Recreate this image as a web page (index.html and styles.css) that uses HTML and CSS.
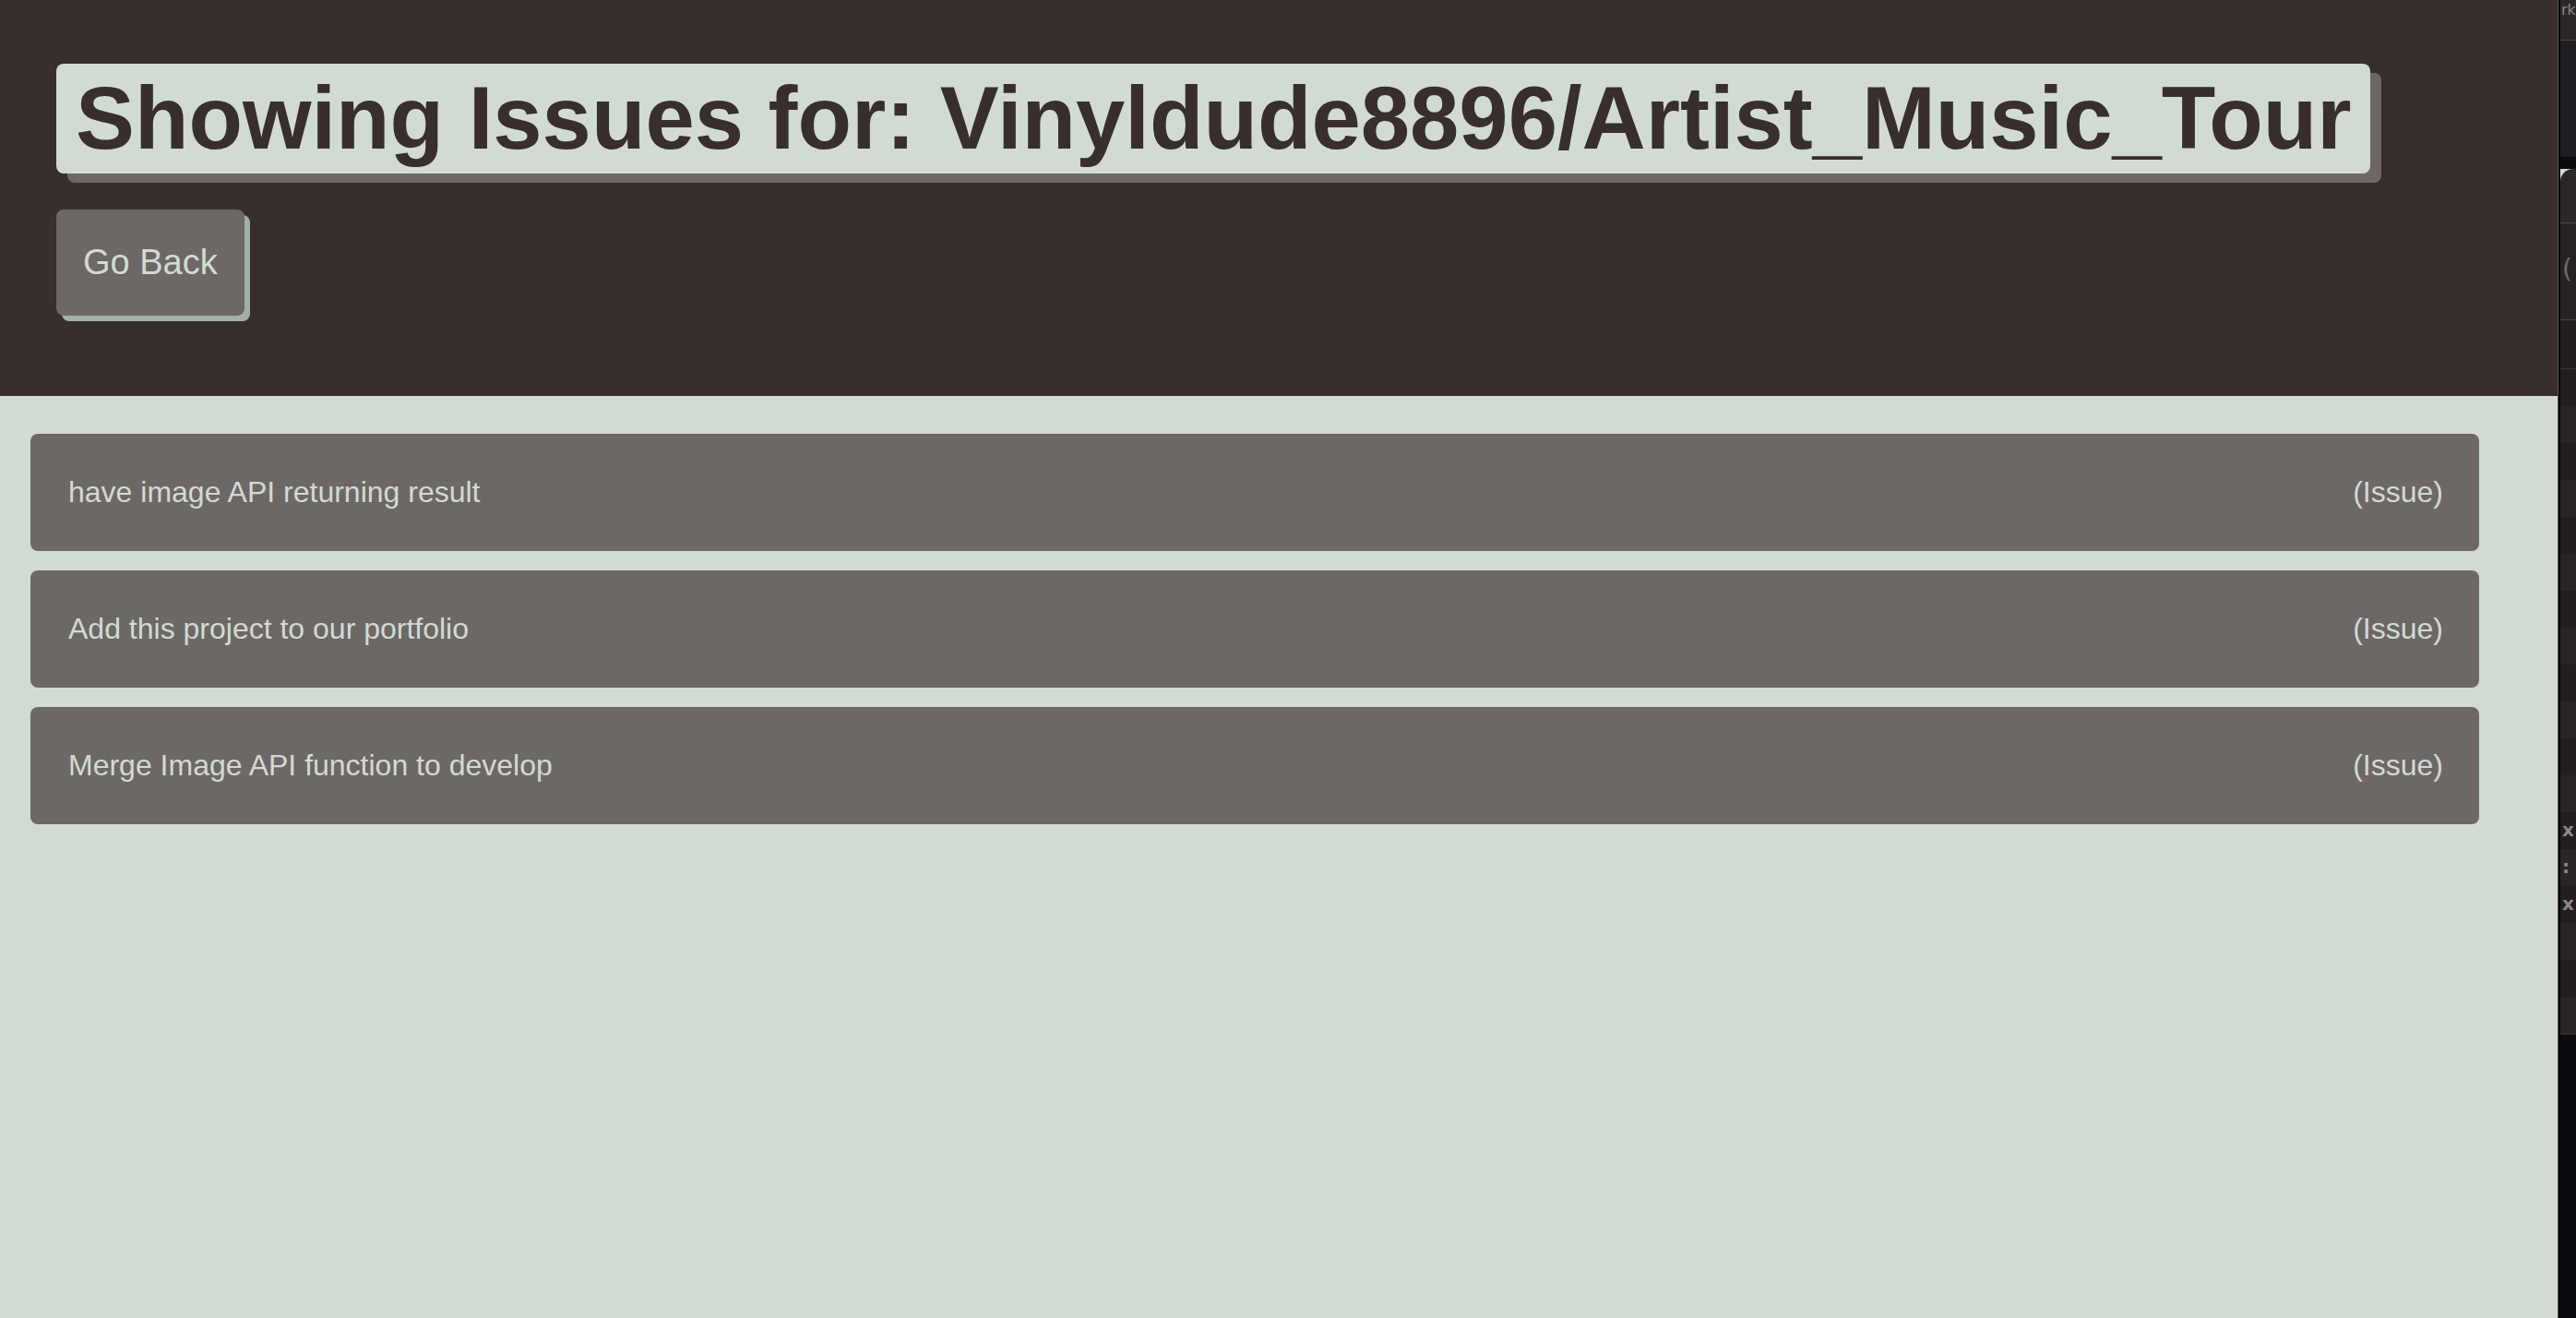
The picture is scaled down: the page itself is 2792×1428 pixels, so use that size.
FILE: index.html
```html
<!DOCTYPE html>
<html lang="en">
<head>
<meta charset="utf-8">
<title>Issues</title>
<link rel="stylesheet" href="styles.css">
</head>
<body>
<div class="screen">
  <main class="app">
    <header class="top">
      <h1 class="title">Showing Issues for: Vinyldude8896/Artist_Music_Tour</h1>
      <button class="back" type="button">Go Back</button>
    </header>
    <section class="list">
      <div class="item"><span class="name">have image API returning result</span><span class="kind">(Issue)</span></div>
      <div class="item"><span class="name">Add this project to our portfolio</span><span class="kind">(Issue)</span></div>
      <div class="item"><span class="name">Merge Image API function to develop</span><span class="kind">(Issue)</span></div>
    </section>
  </main>
  <aside class="side">
    <div class="s s-tab"><span class="glyph">rk</span></div>
    <div class="s s-bar"></div>
    <div class="s s-gap"></div>
    <div class="s s-card"></div>
    <div class="s s-row2"><span class="glyph">(</span></div>
    <div class="s s-row3"></div>
    <div class="s s-rows">
      <div class="r a"></div><div class="r b"></div><div class="r a"></div><div class="r b"></div>
      <div class="r a"></div><div class="r b"></div><div class="r a"></div><div class="r b"></div>
      <div class="r a"></div><div class="r b"></div><div class="r a"></div><div class="r b"></div>
      <div class="r a"><span class="glyph">x</span></div>
      <div class="r b"><span class="glyph">:</span></div>
      <div class="r a"><span class="glyph">x</span></div>
      <div class="r b"></div><div class="r a"></div><div class="r b"></div>
    </div>
    <div class="s s-end"></div>
  </aside>
</div>
</body>
</html>
```

FILE: styles.css
```css
* { box-sizing: border-box; }

html, body {
  margin: 0;
  padding: 0;
  height: 100%;
  overflow: hidden;
}

body {
  font-family: "Liberation Sans", Arial, Helvetica, sans-serif;
  background: #d0dbd3;
}

.screen {
  display: flex;
  height: 1428px;
}

.app {
  flex: 1;
  background: #d0dbd3;
  display: flex;
  flex-direction: column;
  border-right: 1px solid #5b5252;
}

.top {
  background: #382e2e;
  height: 429px;
  padding: 69px 0 0 61px;
  display: flex;
  flex-direction: column;
  align-items: flex-start;
  gap: 39px;
}

.title {
  margin: 0;
  font-size: 95.8px;
  font-weight: 700;
  line-height: normal;
  color: #382e2e;
  background: #d0dbd3;
  padding: 4px 21px 5px;
  border-radius: 8px;
  box-shadow: 12px 10px 0 #6d6865;
  white-space: nowrap;
}

.back {
  font-family: inherit;
  font-size: 38px;
  line-height: normal;
  color: #d0dbd3;
  background: #6d6865;
  border: none;
  border-radius: 8px;
  padding: 36px 29px;
  box-shadow: 6px 6px 0 #a0b0aa;
  cursor: pointer;
}

.list {
  display: flex;
  flex-direction: column;
  gap: 21px;
  padding: 41px 85px 0 33px;
}

.item {
  display: flex;
  justify-content: space-between;
  align-items: center;
  background: #6d6865;
  color: #d0dbd3;
  font-size: 32px;
  line-height: normal;
  padding: 45px 39px 45px 41px;
  border-radius: 8px;
}

/* sliver of a neighbouring window at the right edge */
.side {
  width: 19px;
  flex: none;
  border-left: 2px solid #050507;
  display: flex;
  flex-direction: column;
  overflow: hidden;
  font-family: "DejaVu Sans", sans-serif;
}

.s { flex: none; overflow: hidden; white-space: nowrap; }

.glyph {
  color: #8c878a;
  font-size: 16px;
  line-height: 1;
  display: block;
}

.s-tab { height: 44px; background: #2b2627; border-bottom: 1px solid #4a4447; }
.s-tab .glyph { margin-left: 1px; margin-top: 3px; }
.s-bar { height: 126px; background: #1f1d22; }
.s-gap { height: 13px; background: #0c0c10; }
.s-card { height: 59px; background: #2d2629; border-top-left-radius: 14px; border-bottom: 1px solid #4a4447; }
.s-row2 { height: 105px; background: #272225; border-bottom: 1px solid #4a4447; }
.s-row2 .glyph { margin-top: 36px; margin-left: 2px; font-size: 28px; color: #6f6a6c; }
.s-row3 { height: 53px; background: #221d20; border-bottom: 1px solid #3a3538; }
.s-rows { display: flex; flex-direction: column; border-bottom: 1px solid #3a3538; }
.r { height: 40px; }
.r.a { background: #221d20; }
.r.b { background: #2a2427; }
.r .glyph { margin-left: 2px; margin-top: 9px; font-size: 20px; font-weight: 700; color: #8c878a; }
.s-end { flex: 1; background: #0a0b0f; }
```
